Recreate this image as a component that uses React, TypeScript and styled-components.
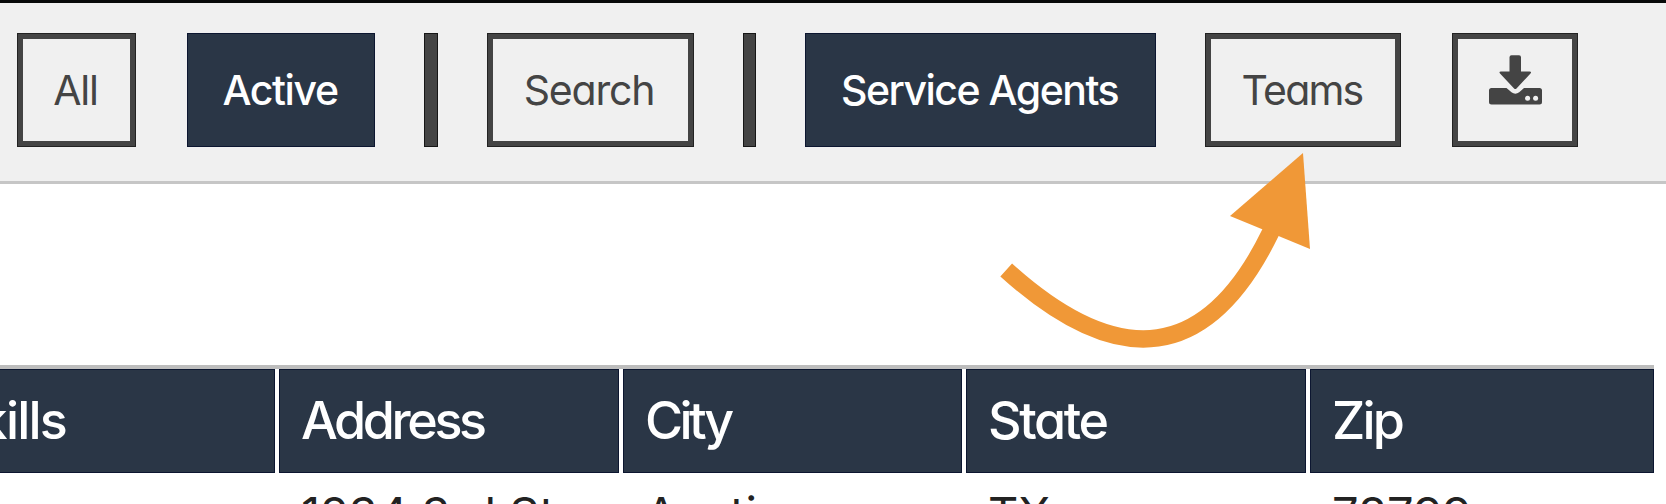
import styled, { createGlobalStyle, css } from 'styled-components';

const colors = {
  navy: '#2a3646',
  charcoal: '#444444',
  bar: '#f0f0f0',
  orange: '#f09837',
};

const GlobalStyle = createGlobalStyle`
  * {
    box-sizing: border-box;
  }

  body {
    margin: 0;
    background: #ffffff;
    font-family: Inter, Lato, sans-serif;
    font-feature-settings: 'cv11';
  }
`;

const Page = styled.main`
  position: relative;
  width: 1666px;
  height: 504px;
  overflow: hidden;
  background: #ffffff;
`;

const Toolbar = styled.nav`
  display: flex;
  align-items: flex-start;
  height: 184px;
  padding: 30px 0 0 17px;
  gap: 49px;
  background: ${colors.bar};
  border-top: 3px solid #080a09;
  border-bottom: 3px solid #c6c6c6;
`;

const FilterButton = styled.button<{
  $width: number;
  $active?: boolean;
  $spacing?: number;
  $offset?: number;
}>`
  display: flex;
  flex: none;
  align-items: center;
  justify-content: center;
  width: ${({ $width }) => $width}px;
  height: 114px;
  margin-left: ${({ $offset }) => $offset ?? 0}px;
  padding: 0 2px 0 0;
  border: 6px solid ${colors.charcoal};
  outline: 1px solid #222222;
  outline-offset: -1px;
  background: transparent;
  color: ${colors.charcoal};
  font: inherit;
  font-size: 41px;
  font-weight: 400;
  letter-spacing: ${({ $spacing }) => $spacing ?? 0}px;
  white-space: nowrap;

  ${({ $active }) =>
    $active &&
    css`
      border-color: ${colors.navy};
      outline-color: #0c1630;
      background: ${colors.navy};
      color: #ffffff;
      font-weight: 500;
    `}
`;

const Divider = styled.span`
  flex: none;
  width: 13.5px;
  height: 114px;
  background: ${colors.charcoal};
  border: 1px solid #161616;
`;

const Table = styled.section`
  width: 1654px;
  margin-top: 181px;
  border-top: 4px solid #bdbdbd;
`;

const Row = styled.div`
  display: grid;
  grid-template-columns: 275px 340px 339px 340px 344px;
  column-gap: 4px;
`;

const HeadCell = styled.div<{ $spacing?: number }>`
  height: 104px;
  padding-left: 21px;
  background: ${colors.navy};
  border: 1px solid #0c1630;
  color: #ffffff;
  font-size: 52px;
  font-weight: 500;
  line-height: 101px;
  letter-spacing: ${({ $spacing }) => $spacing ?? 0}px;
  white-space: nowrap;

  &:first-child {
    display: flex;
    justify-content: flex-end;
    padding: 0 208px 0 0;
    border-left: 0;
  }
`;

const Cell = styled.div`
  padding: 13px 0 0 22px;
  color: #222222;
  font-size: 47px;
  font-weight: 400;
  line-height: 56px;
  white-space: nowrap;
`;

const Arrow = styled.svg`
  position: absolute;
  top: 140px;
  left: 980px;
`;

const DownloadSvg = styled.svg`
  flex: none;
  margin: 0 -2px 20px 0;
`;

const DownloadIcon = () => (
  <DownloadSvg width="54" height="52" viewBox="0 0 54 52" fill={colors.charcoal}>
    <path d="M21.5 3.2Q21.5 1.2 23.5 1.2H31Q33 1.2 33 3.2V17.5H41.5Q44 17.5 42.5 19.5L28.5 34.5Q27.3 35.6 26.1 34.5L12 19.5Q10.5 17.5 13 17.5H21.5Z" />
    <path d="M3.5 34H18.5L23.5 38.3Q27.3 41.2 31.2 38.3L36 34H51.5Q54 34 54 36.5V48Q54 50.5 51.5 50.5H3.5Q1 50.5 1 48V36.5Q1 34 3.5 34Z" />
    <circle cx="39.6" cy="44.3" r="2.5" fill={colors.bar} />
    <circle cx="47.6" cy="44.3" r="2.5" fill={colors.bar} />
  </DownloadSvg>
);

const columns = [
  { name: 'Skills', value: '', spacing: -1.8 },
  { name: 'Address', value: '1234 3rd St', spacing: -3.4 },
  { name: 'City', value: 'Austin', spacing: -3.6 },
  { name: 'State', value: 'TX', spacing: -2.4 },
  { name: 'Zip', value: '78799', spacing: -2.8 },
];

export default function App() {
  return (
    <Page>
      <GlobalStyle />

      <Toolbar>
        <FilterButton $width={119} $spacing={-1.2}>
          All
        </FilterButton>
        <FilterButton $width={188} $offset={2} $active $spacing={-1.4}>
          Active
        </FilterButton>
        <Divider />
        <FilterButton $width={207} $spacing={-1.2}>
          Search
        </FilterButton>
        <Divider />
        <FilterButton $width={351} $active $spacing={-1.5}>
          Service Agents
        </FilterButton>
        <FilterButton $width={196} $spacing={-1.8}>
          Teams
        </FilterButton>
        <FilterButton $width={126} $offset={2} aria-label="Download">
          <DownloadIcon />
        </FilterButton>
      </Toolbar>

      <Table>
        <Row>
          {columns.map(({ name, spacing }) => (
            <HeadCell key={name} $spacing={spacing}>
              {name}
            </HeadCell>
          ))}
        </Row>
        <Row>
          {columns.map(({ name, value }) => (
            <Cell key={name}>{value}</Cell>
          ))}
        </Row>
      </Table>

      <Arrow width="360" height="220" viewBox="0 0 360 220">
        <path
          d="M26.2 130Q197 284.5 290.5 92.7L294 85"
          fill="none"
          stroke={colors.orange}
          strokeWidth="17.5"
        />
        <path d="M323 13L330 109L250 76Z" fill={colors.orange} />
      </Arrow>
    </Page>
  );
}
